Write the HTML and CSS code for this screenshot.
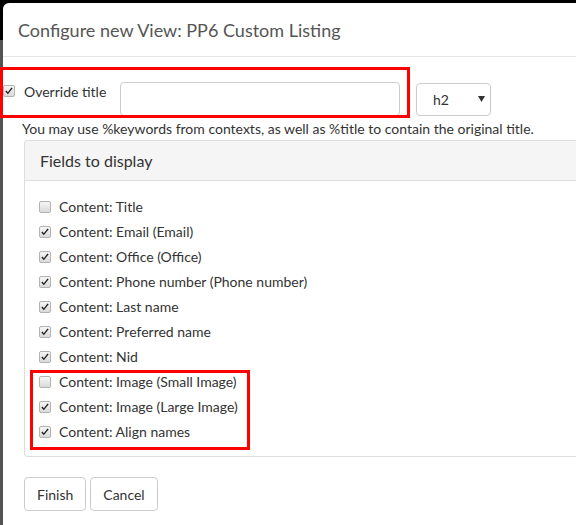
FILE: index.html
```html
<!DOCTYPE html>
<html>
<head>
<meta charset="utf-8">
<link rel="stylesheet" href="styles.css">
</head>
<body>
<div class="modal">
  <div class="modal-header">
    <h4 class="modal-title">Configure new View: PP6 Custom Listing</h4>
  </div>
  <div class="modal-body">
    <div class="override-row">
      <label class="override-label"><span class="cb checked"></span><span>Override title</span></label>
      <div class="text-input"></div>
      <div class="select-box"><span>h2</span><svg class="caret" width="7" height="6" viewBox="0 0 7 6"><path d="M0 0H7L3.5 6Z" fill="#333"/></svg></div>
    </div>
    <p class="help">You may use %keywords from contexts, as well as %title to contain the original title.</p>
    <div class="panel">
      <div class="panel-heading">Fields to display</div>
      <div class="panel-body">
        <label class="item"><span class="cb"></span>Content: Title</label>
        <label class="item"><span class="cb checked"></span>Content: Email (Email)</label>
        <label class="item"><span class="cb checked"></span>Content: Office (Office)</label>
        <label class="item"><span class="cb checked"></span>Content: Phone number (Phone number)</label>
        <label class="item"><span class="cb checked"></span>Content: Last name</label>
        <label class="item"><span class="cb checked"></span>Content: Preferred name</label>
        <label class="item"><span class="cb checked"></span>Content: Nid</label>
        <label class="item"><span class="cb"></span>Content: Image (Small Image)</label>
        <label class="item"><span class="cb checked"></span>Content: Image (Large Image)</label>
        <label class="item"><span class="cb checked"></span>Content: Align names</label>
      </div>
    </div>
    <div class="buttons">
      <button class="btn">Finish</button>
      <button class="btn">Cancel</button>
    </div>
  </div>
</div>
<div class="mark mark-title"></div>
<div class="mark mark-fields"></div>
</body>
</html>
```
FILE: styles.css
```css
html, body {
  margin: 0;
  padding: 0;
  height: 100%;
}
body {
  background: linear-gradient(to bottom, #000 0, #000 40px, #535353 40px);
  font-family: Lato, "Open Sans", sans-serif;
  font-size: 14px;
  color: #333;
  overflow: hidden;
  position: relative;
}
.modal {
  margin: 3px 0 0 3px;
  background: #fff;
  border-top-left-radius: 6px;
  height: 522px;
}
.modal-header {
  height: 54px;
  box-sizing: border-box;
  border-bottom: 1px solid #e5e5e5;
  display: flex;
  align-items: center;
  padding: 0 15px;
}
.modal-title {
  margin: 0;
  font-size: 18px;
  font-weight: normal;
  color: #555;
}
.modal-body {
  padding: 25px 0 0 0;
}
.override-row {
  display: flex;
  align-items: center;
  height: 34px;
}
.override-label {
  display: flex;
  align-items: center;
  width: 117px;
  margin-top: -16px;
}
.override-label .cb {
  margin-left: 0;
  margin-right: 9px;
}
.text-input {
  width: 278px;
  height: 32px;
  border: 1px solid #ccc;
  border-radius: 4px;
  margin-right: 16px;
}
.select-box {
  border: 1px solid #ccc;
  border-radius: 4px;
  display: flex;
  align-items: center;
  justify-content: space-between;
  padding: 0 5px 0 16px;
  box-sizing: border-box;
  width: 75px;
  height: 33px;
}
.caret {
  display: block;
  margin-top: -1px;
}
.help {
  margin: 3px 0 0 19px;
  font-size: 14px;
  line-height: 20px;
  color: #333;
}
.panel {
  margin: 1px 0 0 21px;
  border: 1px solid #ddd;
  border-right: none;
  border-radius: 4px 0 0 4px;
}
.panel-heading {
  background: #f5f5f5;
  border-bottom: 1px solid #ddd;
  height: 40px;
  box-sizing: border-box;
  padding: 0 15px;
  display: flex;
  align-items: center;
  font-size: 16px;
  color: #333;
  border-top-left-radius: 4px;
}
.panel-body {
  padding: 13px 14px 12px;
  display: flex;
  flex-direction: column;
}
.item {
  height: 25px;
  display: flex;
  align-items: center;
}
.cb {
  width: 10px;
  height: 10px;
  border: 1px solid #b3b3b3;
  border-radius: 2px;
  background: linear-gradient(#f6f6f6, #dadada);
  margin-right: 8px;
  position: relative;
  flex: none;
}
.cb.checked::after {
  content: "";
  position: absolute;
  left: 1px;
  top: 1px;
  width: 8px;
  height: 8px;
  background: no-repeat center/contain url("data:image/svg+xml,%3Csvg xmlns='http://www.w3.org/2000/svg' viewBox='0 0 12 12'%3E%3Cpath d='M0.5 6.8L4.3 11L11.5 1.8L9.8 0.6L4.3 7.8L2 5.3Z' fill='%23222'/%3E%3C/svg%3E");
}
.buttons {
  margin: 20px 0 0 21px;
  display: flex;
  gap: 4px;
}
.btn {
  font-family: Lato, "Open Sans", sans-serif;
  font-size: 14px;
  color: #333;
  background: #fff;
  border: 1px solid #ccc;
  border-radius: 4px;
  height: 34px;
  padding: 0 12px;
}
.mark {
  position: absolute;
  border: 3px solid #f00;
  box-sizing: border-box;
}
.mark-title {
  left: 0;
  top: 67px;
  width: 410px;
  height: 51px;
}
.mark-fields {
  left: 30px;
  top: 370px;
  width: 220px;
  height: 80px;
}
```
